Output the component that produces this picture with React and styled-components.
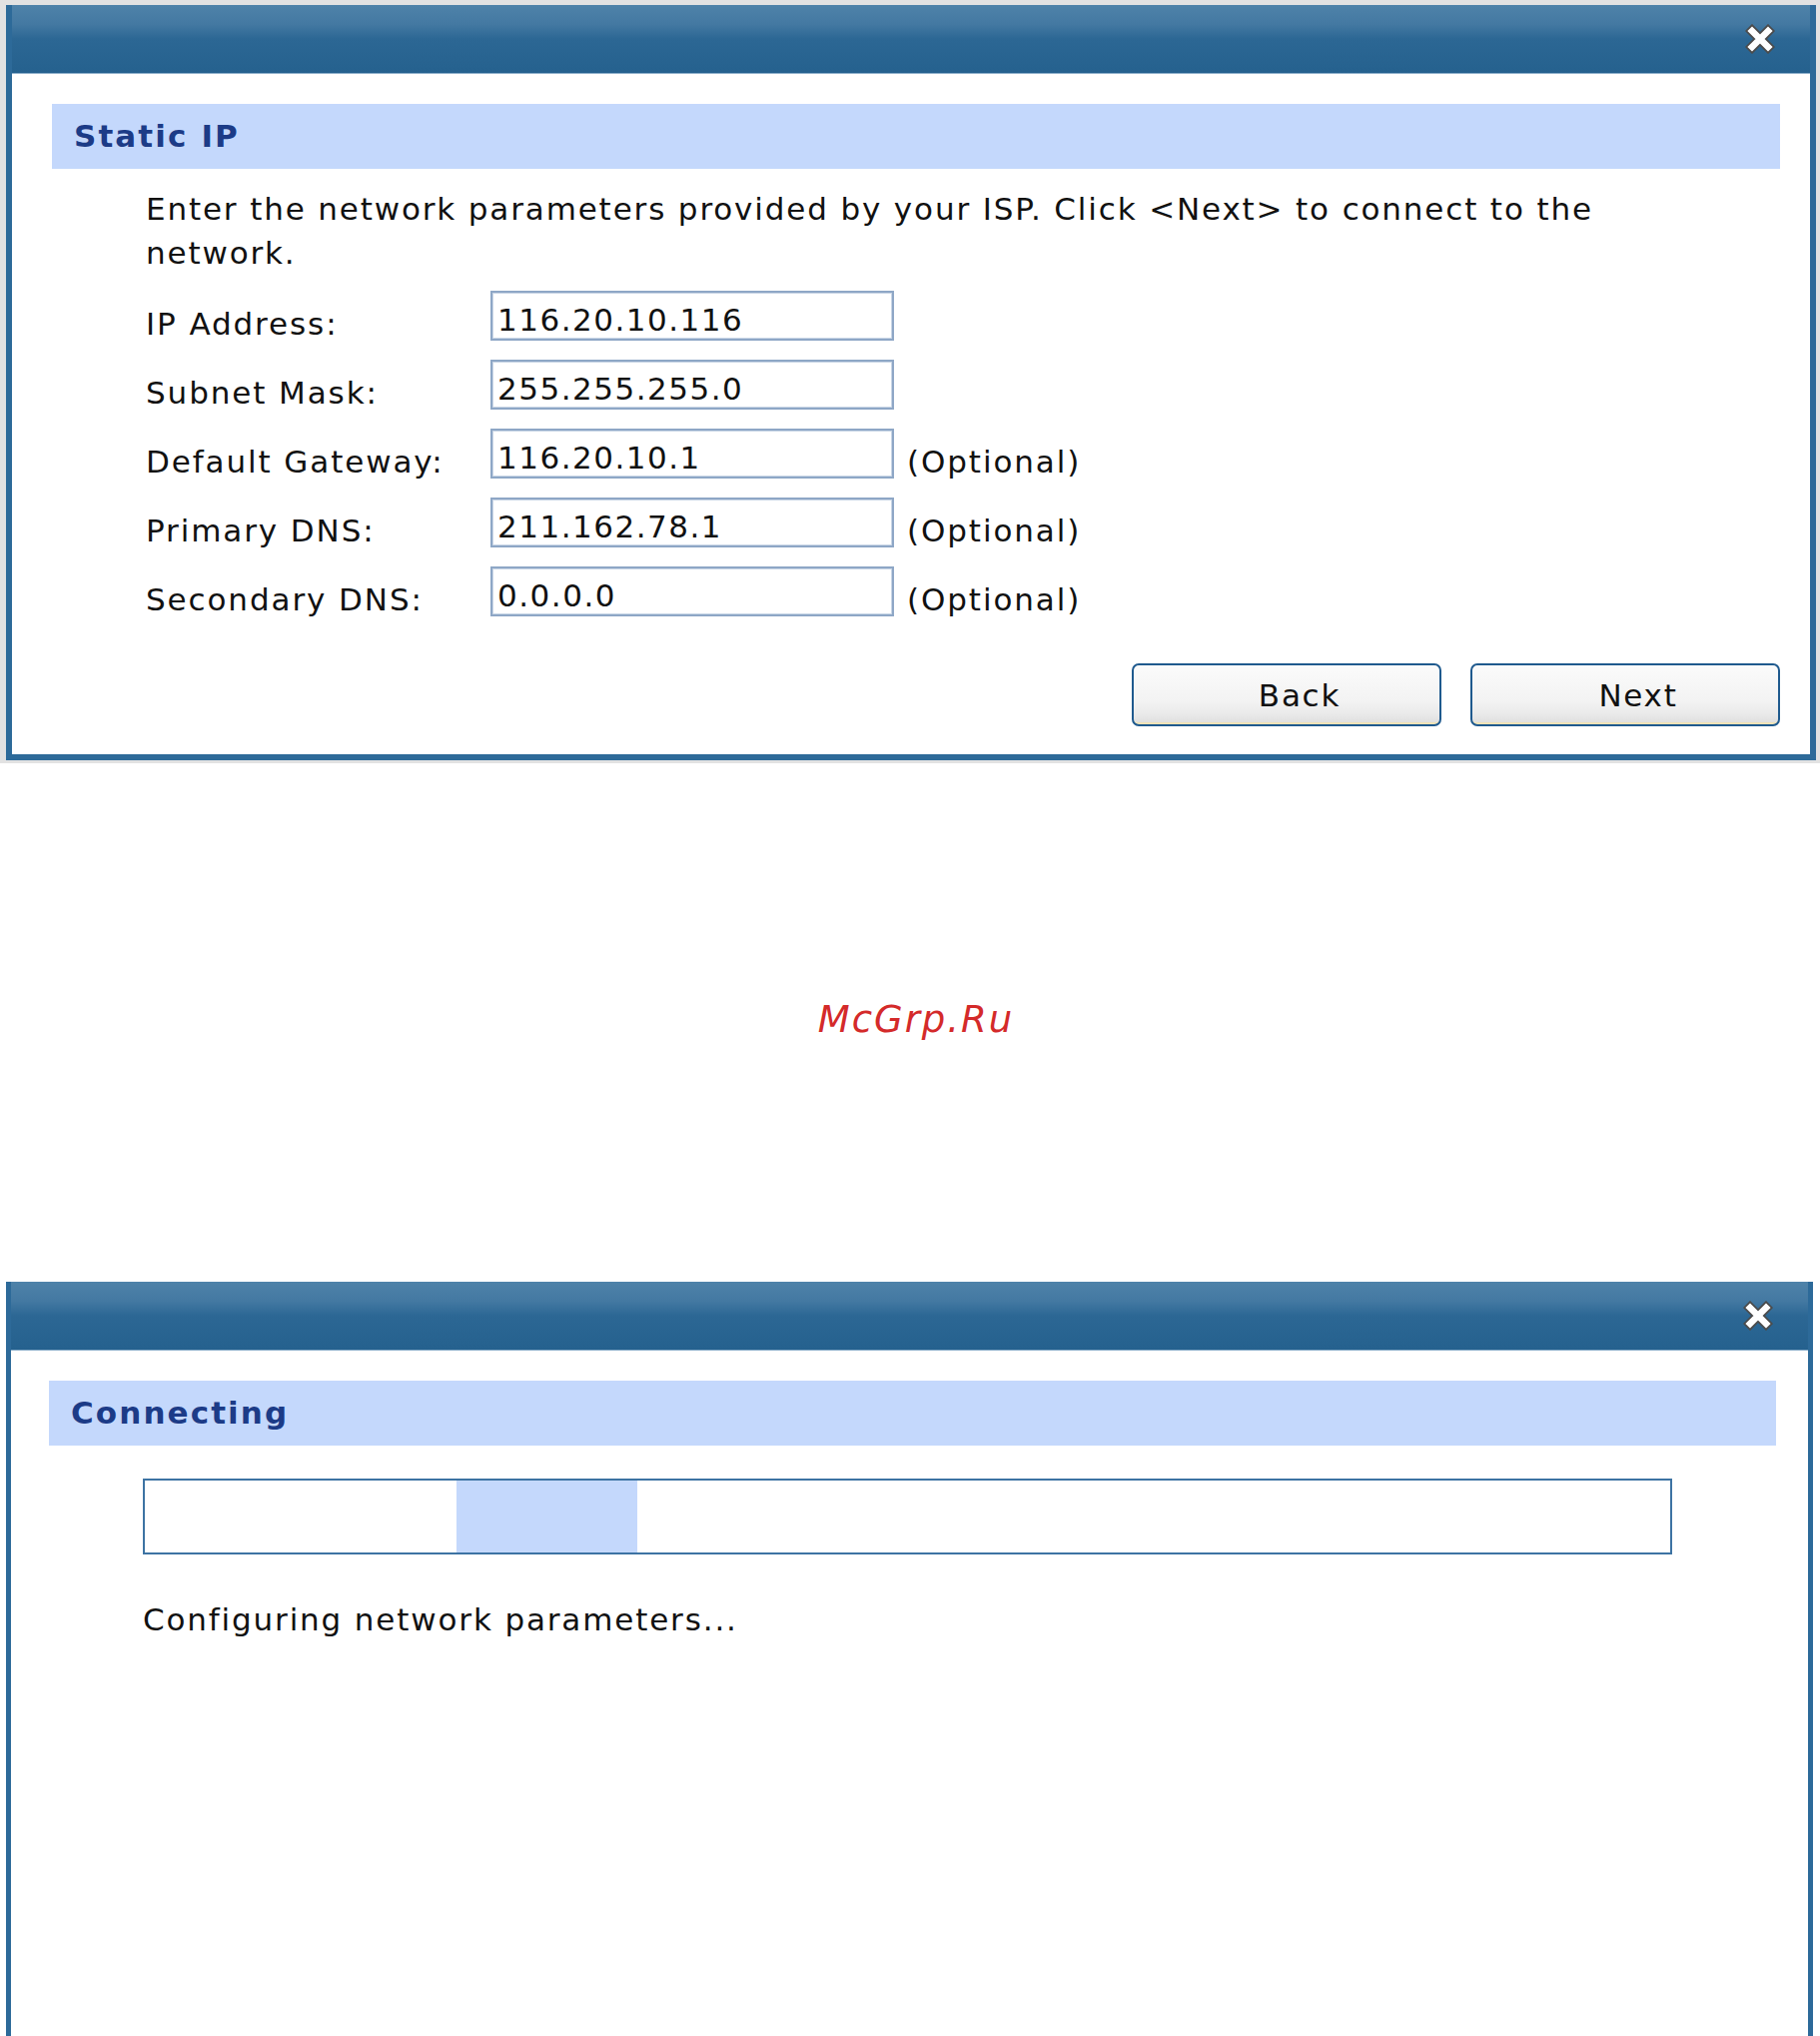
import styled, { createGlobalStyle } from "styled-components";

const GlobalStyle = createGlobalStyle`
  html, body {
    margin: 0;
    padding: 0;
    background: #ffffff;
  }
  body {
    font-family: "DejaVu Sans", Verdana, sans-serif;
    color: #111;
  }
`;

const Page = styled.div`
  display: flex;
  flex-direction: column;
  width: 1822px;
`;

const Frame = styled.div`
  background: ${props => props.$gray ? "#e2e2e2" : "#ffffff"};
  padding: ${props => props.$gray ? "5px 4px 3px 6px" : "0 0 0 6px"};
  margin-top: ${props => props.$top || 0}px;
`;

const Window = styled.div`
  width: ${props => props.$width}px;
  box-sizing: border-box;
  display: flex;
  flex-direction: column;
  border-style: solid;
  border-color: #2d6a99;
  border-width: 0 ${props => props.$side}px ${props => props.$bottom}px ${props => props.$side}px;
`;

const TitleBar = styled.div`
  height: 69px;
  display: flex;
  align-items: center;
  justify-content: flex-end;
  padding-right: 35px;
  background: linear-gradient(#4e82a9 0%, #4479a2 28%, #2c6794 50%, #25618e 100%);
  border-bottom: 1px solid #8fb0cb;
  box-sizing: border-box;
`;

const CloseIcon = () => (
  <svg width="30" height="30" viewBox="0 0 30 30">
    <g strokeLinecap="square">
      <path d="M7 7 L23 23 M23 7 L7 23" stroke="#4b4b4b" strokeWidth="10" />
      <path d="M7 7 L23 23 M23 7 L7 23" stroke="#ffffff" strokeWidth="6.5" />
    </g>
  </svg>
);

const Body = styled.div`
  display: flex;
  flex-direction: column;
  background: #ffffff;
  padding-bottom: ${props => props.$padBottom || 0}px;
  ${props => props.$height ? `height: ${props.$height}px; box-sizing: border-box;` : ""}
`;

const SectionHeader = styled.div`
  height: 65px;
  display: flex;
  align-items: center;
  margin: 30px ${props => props.$right}px 0 ${props => props.$left}px;
  padding-left: 22px;
  background: #c4d8fc;
  color: #1c3b87;
  font-weight: bold;
  font-size: 31px;
  letter-spacing: 2.1px;
  line-height: 1;
`;

const Text = styled.div`
  font-size: 31px;
  line-height: 44px;
  letter-spacing: 1.85px;
  margin: ${props => props.$top}px 0 0 ${props => props.$left}px;
  max-width: ${props => props.$max ? `${props.$max}px` : "none"};
`;

const Form = styled.div`
  display: grid;
  grid-template-columns: 345px 404px auto;
  grid-auto-rows: 50px;
  row-gap: 19px;
  margin: 16px 0 0 134px;
  font-size: 31px;
  letter-spacing: 1.9px;
`;

const Label = styled.div`
  line-height: 34px;
  padding-top: 16px;
  white-space: nowrap;
`;

const Field = styled.input`
  width: 404px;
  height: 50px;
  box-sizing: border-box;
  border: 2px solid #8ea7c6;
  box-shadow: inset 0 0 0 1px #c9d6e6;
  padding: 7px 0 0 5px;
  margin: 0;
  font-family: inherit;
  font-size: 31px;
  letter-spacing: 1.5px;
  color: #111;
  background: #ffffff;
  outline: none;
`;

const Hint = styled.div`
  line-height: 34px;
  padding: 16px 0 0 13px;
  white-space: nowrap;
`;

const Buttons = styled.div`
  display: flex;
  justify-content: flex-end;
  gap: 29px;
  margin: 47px 30px 0 0;
`;

const Button = styled.button`
  width: 310px;
  height: 63px;
  box-sizing: border-box;
  border: 2px solid #1f5a8e;
  border-radius: 7px;
  background: linear-gradient(#fbfbfb 0%, #f3f3f3 60%, #ebebeb 80%, #dedede 100%);
  box-shadow: inset 0 -9px 0 -7px #efe3b8;
  padding: 0 0 0 26px;
  font-family: inherit;
  font-size: 31px;
  letter-spacing: 1.75px;
  color: #111;
  cursor: pointer;
`;

const Watermark = styled.div`
  margin-top: 236px;
  text-align: center;
  font-style: italic;
  font-size: 37px;
  line-height: 42px;
  letter-spacing: 2px;
  color: #d42a2a;
  padding-left: 12px;
`;

const ProgressBar = styled.div`
  display: flex;
  width: 1531px;
  height: 76px;
  box-sizing: border-box;
  margin: 33px 0 0 132px;
  border: 2px solid #3d73a3;
  background: #ffffff;
`;

const ProgressChunk = styled.div`
  margin-left: ${props => props.$offset}px;
  width: ${props => props.$width}px;
  background: #c4d8fc;
`;

const fields = [
  { label: "IP Address:", value: "116.20.10.116" },
  { label: "Subnet Mask:", value: "255.255.255.0" },
  { label: "Default Gateway:", value: "116.20.10.1", optional: true },
  { label: "Primary DNS:", value: "211.162.78.1", optional: true },
  { label: "Secondary DNS:", value: "0.0.0.0", optional: true },
];

export default function App() {
  return (
    <>
      <GlobalStyle />
      <Page>
        <Frame $gray>
          <Window $width={1812} $side={6} $bottom={6}>
            <TitleBar>
              <CloseIcon />
            </TitleBar>
            <Body $padBottom={28}>
              <SectionHeader $left={40} $right={30}>Static IP</SectionHeader>
              <Text $top={18} $left={134} $max={1560}>
                Enter the network parameters provided by your ISP. Click &lt;Next&gt; to connect to the network.
              </Text>
              <Form>
                {fields.map(f => [
                  <Label key={f.label + "l"}>{f.label}</Label>,
                  <Field key={f.label + "f"} defaultValue={f.value} />,
                  <Hint key={f.label + "h"}>{f.optional ? "(Optional)" : ""}</Hint>,
                ])}
              </Form>
              <Buttons>
                <Button>Back</Button>
                <Button>Next</Button>
              </Buttons>
            </Body>
          </Window>
        </Frame>

        <Watermark>McGrp.Ru</Watermark>

        <Frame $top={241}>
          <Window $width={1809} $side={5} $bottom={0}>
            <TitleBar>
              <CloseIcon />
            </TitleBar>
            <Body $height={686}>
              <SectionHeader $left={38} $right={32}>Connecting</SectionHeader>
              <ProgressBar>
                <ProgressChunk $offset={312} $width={181} />
              </ProgressBar>
              <Text $top={43} $left={132}>Configuring network parameters...</Text>
            </Body>
          </Window>
        </Frame>
      </Page>
    </>
  );
}
